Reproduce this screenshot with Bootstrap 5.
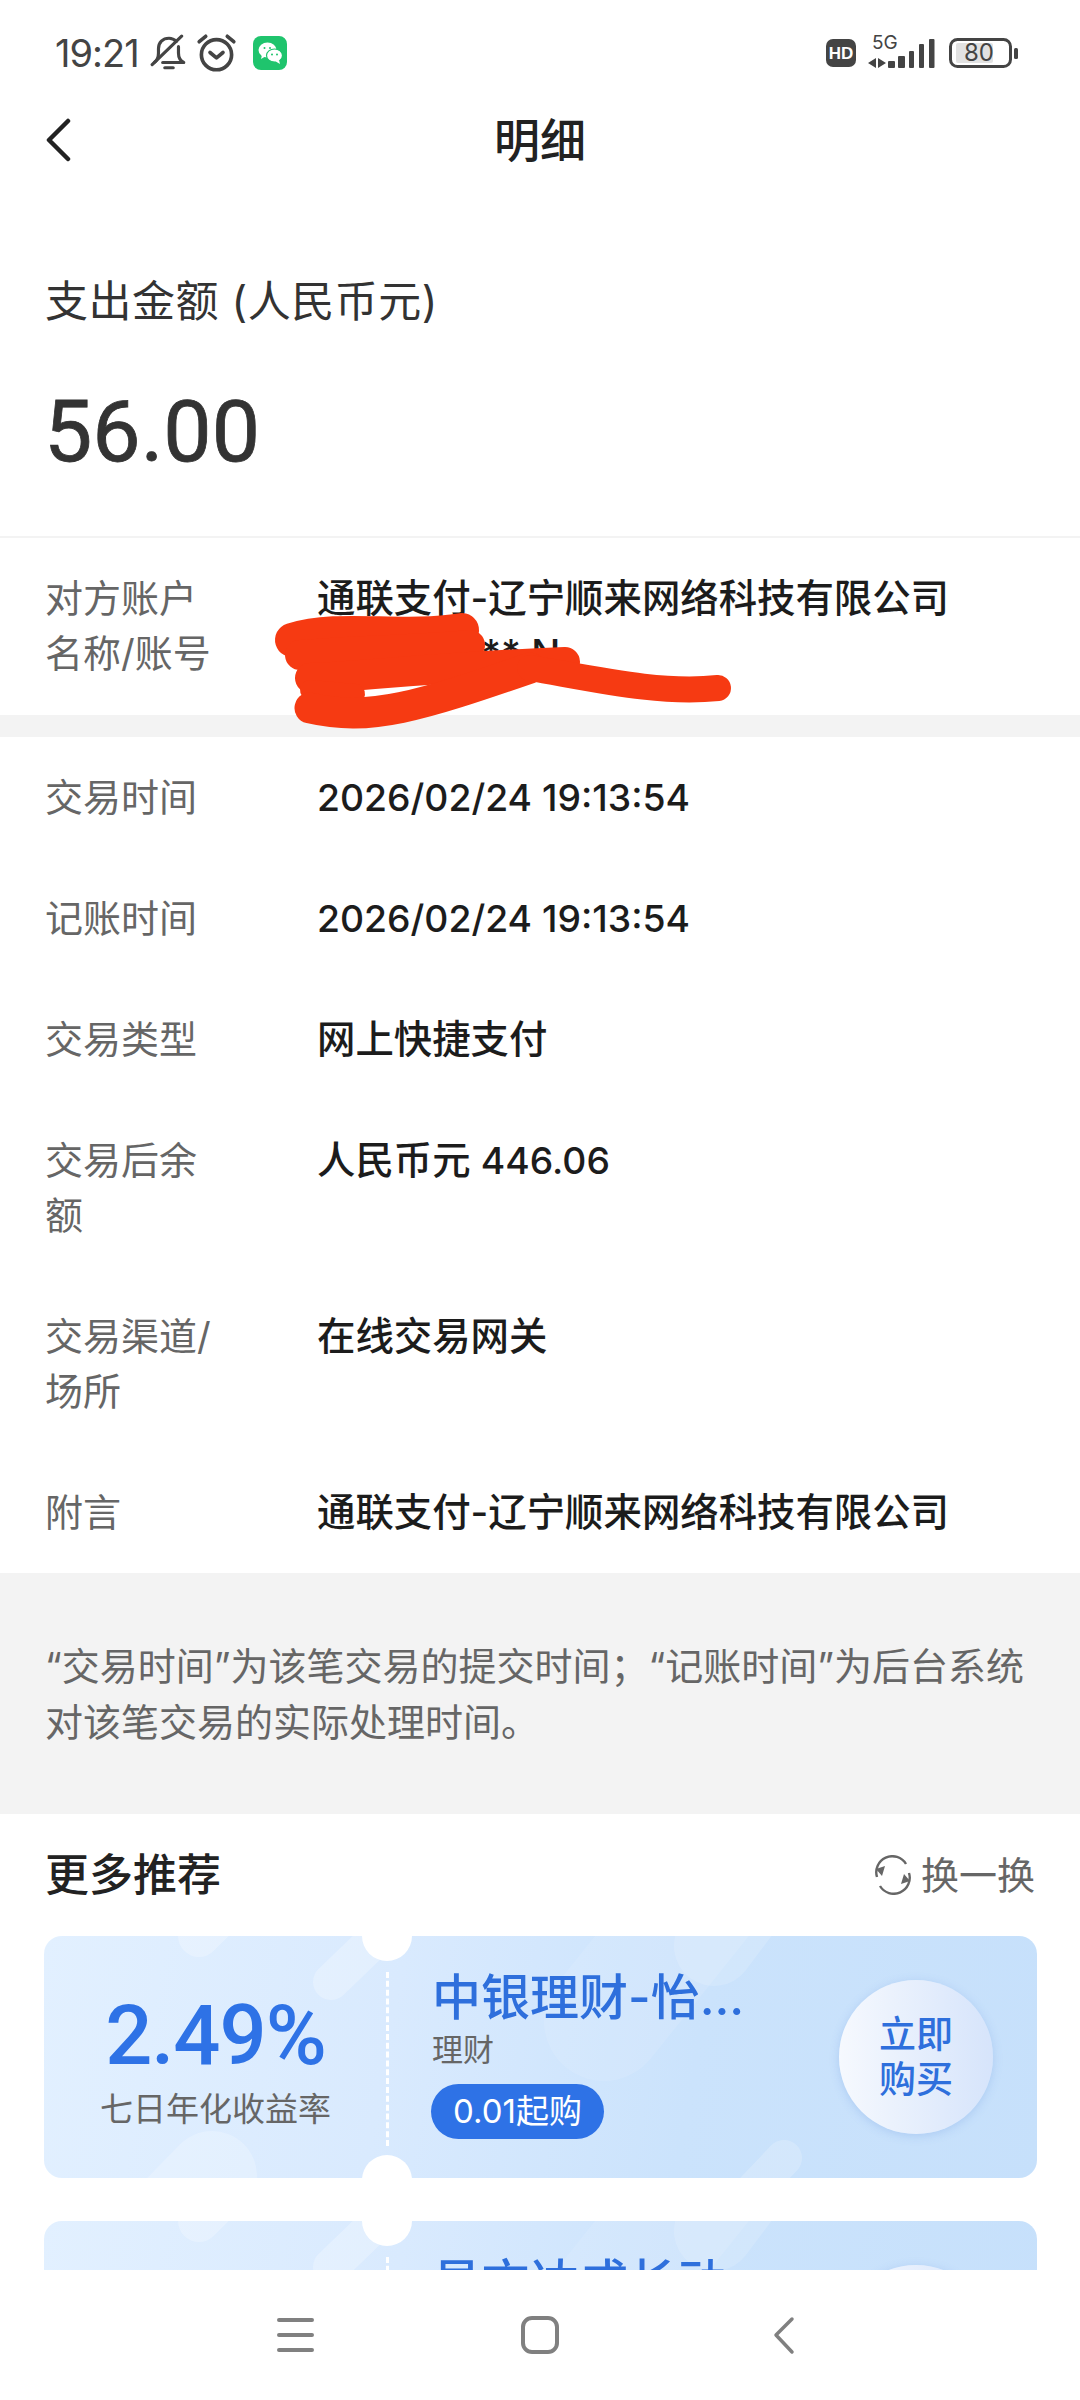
<!DOCTYPE html>
<html lang="zh-CN">
<head>
  <meta charset="UTF-8" />
  <meta name="viewport" content="width=device-width, initial-scale=1.0"/>
  <title>明细</title>
  <link href="https://cdn.jsdelivr.net/npm/bootstrap@5.3.3/dist/css/bootstrap.min.css" rel="stylesheet"/>
  <style>
    body {
      width: 1080px;
      height: 2400px;
      overflow: hidden;
      position: relative;
      background: #fff;
      font-family: "Inter", "Noto Sans CJK SC", sans-serif;
      color: #222;
    }
    .status-bar { height: 75px; padding: 30px 56px 0 55px; color: #444; }
    .status-time { font-size: 38px; line-height: 44px; width: 95px; letter-spacing: -1px; }
    .wechat-box { width: 34px; height: 34px; background: #1fc46d; border-radius: 8px; }
    .page-head { height: 130px; position: relative; padding-left: 44px; }
    .page-title { font-size: 46px; font-weight: 500; position: absolute; left: 0; right: 0; top: 0; line-height: 130px; text-align: center; color: #222; }
    .amount-block { height: 333px; padding: 68px 45px 0; border-bottom: 2px solid #f3f3f3; }
    .amount-label { font-size: 43px; line-height: 56px; color: #333; letter-spacing: .5px; }
    .amount-num { font-family: "Roboto", sans-serif; font-size: 86px; line-height: 90px; margin: 58px 0 0 -1px; font-weight: 400; color: #333; -webkit-text-stroke: .8px #333; }
    .info-row { display: flex; padding: 33px 45px; font-size: 38px; line-height: 55px; }
    .info-row-first { padding-bottom: 34px; }
    .info-label { width: 272px; padding-right: 97px; color: #666; flex-shrink: 0; }
    .info-value { color: #1c1c1c; font-weight: 500; font-size: 38.400px; }
    .num-text { font-size: 37.300px; line-height: 1; }
    .gap-band { height: 22px; background: #f3f3f3; }
    .note-block { background: #f3f3f3; height: 241px; padding: 65px 45px 0; font-size: 38px; line-height: 56px; color: #666; }
    .more-head { padding: 34px 45px 0 45px; height: 122px; }
    .more-title { font-size: 44px; line-height: 54px; font-weight: 500; color: #222; }
    .swap-btn { font-size: 38px; line-height: 54px; height: 54px; color: #666; }
    .offer-list { height: 334px; overflow: hidden; }
    .offer-card {
      position: relative;
      height: 242px;
      margin: 0 43px 43px 44px;
      border-radius: 18px;
      background: linear-gradient(100deg, #e2f0ff 0%, #d9eafe 35%, #cbe3fc 65%, #c6e0fb 100%);
      overflow: hidden;
    }
    .card-deco { position: absolute; left: 0; top: 0; }
    .notch { position: absolute; left: 318px; width: 50px; height: 50px; border-radius: 50%; background: #fff; }
    .notch-top { top: -25px; }
    .notch-bottom { bottom: -27px; }
    .dash-line { position: absolute; left: 342px; top: 36px; height: 174px; border-left: 3px dashed #fff; }
    .rate-col { position: relative; width: 343px; padding-top: 55px; text-align: center; }
    .rate-num { font-family: "Roboto", sans-serif; font-size: 83px; line-height: 90px; font-weight: 500; color: #2e72e6; letter-spacing: -1px; }
    .rate-label { font-size: 33px; line-height: 44px; color: #666; margin-top: 6px; }
    .prod-col { position: relative; padding: 31px 0 0 45px; flex-grow: 1; }
    .prod-name { font-size: 49px; line-height: 62px; font-weight: 500; color: #2e6fdc; white-space: nowrap; }
    .prod-type { font-size: 31px; line-height: 42px; color: #666; }
    .prod-pill { display: inline-block; margin: 13px 0 0 -1px; height: 55px; padding: 0 22px; line-height: 55px; border-radius: 28px; background: #2e72e6; color: #fff; font-size: 33px; }
    .buy-btn {
      position: absolute;
      left: 795px;
      top: 44px;
      width: 154px;
      height: 154px;
      border-radius: 50%;
      background: linear-gradient(90deg, #f6f9fe, #d6e4fb);
      box-shadow: 0 2px 10px rgba(90, 140, 220, .25);
      color: #2e6fdc;
      font-size: 37px;
      line-height: 45px;
      font-weight: 500;
    }
    .bottom-nav { position: absolute; left: 0; right: 0; top: 2270px; height: 130px; background: #fff; }
    .nav-inner { position: absolute; left: 0; top: 0; }
    .scribble { position: absolute; left: 0; top: 0; pointer-events: none; }
  </style>
</head>
<body>
  <!-- status bar -->
  <div class="status-bar d-flex align-items-center justify-content-between">
    <div class="d-flex align-items-center">
      <span class="status-time">19:21</span>
      <svg width="38" height="40" viewBox="0 0 36 38" fill="none" stroke="#444" stroke-width="3" stroke-linecap="round" stroke-linejoin="round">
        <path d="M4 28c3-2 4-5 4-9v-4c0-6 4-10 10-10 3 0 5 1 7 3M27 13v6c0 4 1 7 5 9H12"/>
        <path d="M14 33h8"/>
        <path d="M2 30 30 3"/>
      </svg>
      <svg class="ms-2" width="41" height="41" viewBox="0 0 38 38" fill="none" stroke="#444" stroke-width="3.400" stroke-linecap="round" stroke-linejoin="round">
        <circle cx="19" cy="21" r="14"/>
        <path d="M13 19l6 5 6-5"/>
        <path d="M3 9l6-5M35 9l-6-5"/>
      </svg>
      <span class="wechat-box ms-3 d-flex align-items-center justify-content-center">
        <svg width="25" height="22" viewBox="0 0 25 22">
          <ellipse cx="9.500" cy="8" rx="9" ry="7.500" fill="#fff"/>
          <path d="M4 13l-1 4 5-3z" fill="#fff"/>
          <ellipse cx="16.500" cy="13.500" rx="8" ry="6.500" fill="#fff" stroke="#1fc46d" stroke-width="1.200"/>
          <path d="M21 18l1 4-5-3z" fill="#fff"/>
          <circle cx="6.500" cy="6" r="1" fill="#1fc46d"/>
          <circle cx="12" cy="6" r="1" fill="#1fc46d"/>
          <circle cx="14" cy="12.500" r="1" fill="#1fc46d"/>
          <circle cx="19" cy="12.500" r="1" fill="#1fc46d"/>
        </svg>
      </span>
    </div>
    <svg width="204" height="44" viewBox="0 0 204 44" fill="none">
      <rect x="6" y="8" width="30" height="28" rx="7" fill="#444"/>
      <text x="21" y="28" text-anchor="middle" font-family="Liberation Sans" font-weight="700" font-size="17" fill="#fff">HD</text>
      <text x="52" y="18" font-family="Inter" font-size="19" fill="#444">5G</text>
      <path d="M56 27v10l-8-5zM58 27v10l8-5z" fill="#444"/>
      <g fill="#444">
        <rect x="68" y="30" width="7" height="7" rx="1"/>
        <rect x="78" y="25" width="7" height="12" rx="1"/>
        <rect x="89" y="20" width="5" height="17" rx="1"/>
        <rect x="99" y="13" width="5" height="24" rx="1"/>
        <rect x="109" y="8" width="5.500" height="29" rx="1"/>
      </g>
      <rect x="130.500" y="8.500" width="60" height="27" rx="7" stroke="#444" stroke-width="3"/>
      <rect x="136" y="12" width="37" height="20" rx="2" fill="#e2e2e2"/>
      <text x="159" y="30" text-anchor="middle" font-family="Inter" font-size="24" fill="#444">80</text>
      <rect x="194" y="17" width="4" height="11" rx="1.500" fill="#444"/>
    </svg>
  </div>

  <!-- title -->
  <div class="page-head d-flex align-items-center">
    <span class="page-title">明细</span>
    <svg class="position-relative" width="30" height="44" viewBox="0 0 30 44" fill="none" stroke="#222" stroke-width="4.500" stroke-linecap="round" stroke-linejoin="round">
      <path d="M24 3 5 22l19 19"/>
    </svg>
  </div>

  <div class="amount-block">
    <div class="amount-label">支出金额 (人民币元)</div>
    <div class="amount-num">56.00</div>
  </div>

  <div class="info-row info-row-first">
    <div class="info-label">对方账户<br>名称/账号</div>
    <div class="info-value">通联支付-辽宁顺来网络科技有限公司<br>6********* N</div>
  </div>
  <div class="gap-band"></div>

  <div id="infoRows"></div>

  <div class="note-block">“交易时间”为该笔交易的提交时间；“记账时间”为后台系统对该笔交易的实际处理时间。</div>

  <div class="more-head d-flex justify-content-between align-items-start">
    <span class="more-title">更多推荐</span>
    <span class="swap-btn d-flex align-items-center gap-2">
      <svg width="40" height="40" viewBox="0 0 40 40" fill="none" stroke="#666" stroke-width="2.400">
        <path d="M4 22A16 16 0 0 1 33 9"/>
        <path d="M36 18A16 16 0 0 1 7 31"/>
        <path d="M3 14l9-3-3 10zM37 26l-9 3 3-10z" fill="#666" stroke="none"/>
      </svg>
      换一换
    </span>
  </div>

  <div class="offer-list" id="offerCards"></div>

  <div class="bottom-nav">
    <svg class="nav-inner" width="1080" height="130" viewBox="0 0 1080 130" fill="none" stroke="#808080" stroke-linecap="round" stroke-linejoin="round">
      <path d="M279 50h33M279 65h33M279 80h33" stroke-width="4"/>
      <rect x="523" y="48" width="34" height="34" rx="9" stroke-width="4"/>
      <path d="M792 49 776 65l16 17" stroke-width="3.500"/>
    </svg>
  </div>

  <!-- marker scribble over the account number -->
  <svg class="scribble" width="1080" height="760" viewBox="0 0 1080 760" fill="none" stroke="#f63a12" stroke-linecap="round" stroke-linejoin="round">
    <path d="M292 640C340 625 400 640 462 630" stroke-width="34"/>
    <path d="M300 655C360 650 420 650 470 645" stroke-width="30"/>
    <path d="M310 678C370 676 420 668 565 662" stroke-width="30"/>
    <path d="M310 690 355 694" stroke-width="20"/>
    <path d="M310 708C370 722 420 706 530 668" stroke-width="31"/>
    <path d="M530 668C600 680 660 694 718 688" stroke-width="26"/>
  </svg>

  <script src="https://cdn.jsdelivr.net/npm/bootstrap@5.3.3/dist/js/bootstrap.bundle.min.js"></script>
  <script>
    const rows = [
      ['交易时间', '<span class="num-text">2026/02/24 19:13:54</span>'],
      ['记账时间', '<span class="num-text">2026/02/24 19:13:54</span>'],
      ['交易类型', '网上快捷支付'],
      ['交易后余额', '人民币元 <span class="num-text">446.06</span>'],
      ['交易渠道/场所', '在线交易网关'],
      ['附言', '通联支付-辽宁顺来网络科技有限公司']
    ];
    document.getElementById('infoRows').innerHTML = rows.map(r => `
      <div class="info-row">
        <div class="info-label">${r[0]}</div>
        <div class="info-value">${r[1]}</div>
      </div>`).join('');

    const deco = `
      <svg class="card-deco" width="993" height="242" viewBox="0 0 993 242" fill="none" stroke="#fff" stroke-linecap="round">
        <path d="M170 -15 155 0" stroke-width="42" opacity=".25"/>
        <path d="M287 46 345 -10" stroke-width="36" opacity=".25"/>
        <path d="M168 240 90 320" stroke-width="90" opacity=".22"/>
        <path d="M560 85 660 -40" stroke-width="120" opacity=".1"/>
        <path d="M670 10 700 -30" stroke-width="80" opacity=".15"/>
        <path d="M740 222 680 285" stroke-width="36" opacity=".2"/>
      </svg>`;
    // second card sits under the bottom nav, only its top edge shows
    const cards = [
      { rate: '2.49%', name: '中银理财-怡...' },
      { name: '易方达成长动...' }
    ];
    document.getElementById('offerCards').innerHTML = cards.map(c => `
      <div class="offer-card d-flex">
        ${deco}
        <div class="rate-col">
          ${c.rate ? `<div class="rate-num">${c.rate}</div><div class="rate-label">七日年化收益率</div>` : ''}
        </div>
        <div class="prod-col">
          <div class="prod-name">${c.name}</div>
          ${c.rate ? '<div class="prod-type">理财</div><span class="prod-pill">0.01起购</span>' : ''}
        </div>
        <div class="dash-line"></div>
        <div class="notch notch-top"></div>
        <div class="notch notch-bottom"></div>
        <div class="buy-btn d-flex align-items-center justify-content-center text-center">${c.rate ? '立即<br>购买' : ''}</div>
      </div>`).join('');
  </script>
</body>
</html>
